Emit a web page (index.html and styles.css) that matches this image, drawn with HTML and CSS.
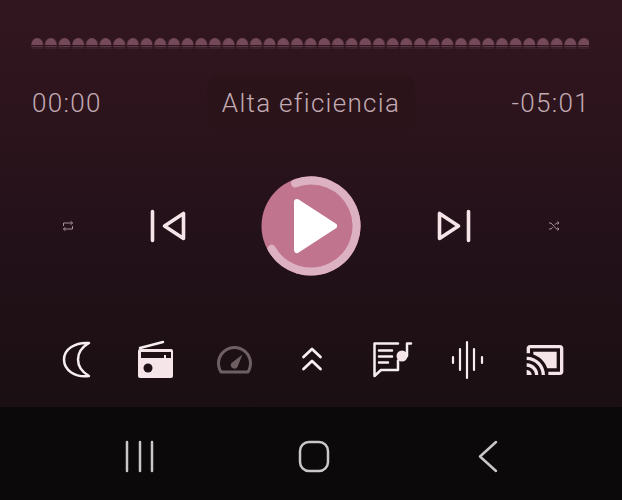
FILE: index.html
```html
<!DOCTYPE html>
<html lang="en">
<head>
    <meta charset="UTF-8">
    <meta name="viewport" content="width=device-width, initial-scale=1.0">
    <title>Player</title>
    <link rel="stylesheet" href="styles.css">
</head>
<body>
    <div class="player">
        <!-- Seek bar -->
        <svg class="seek" width="558" height="13" viewBox="0 0 558 13">
            <defs>
                <pattern id="bump" width="13.67" height="13" patternUnits="userSpaceOnUse">
                    <path d="M0.300 8V7.500A5.900 6.500 0 0 1 12.100 7.500V8Z" fill="#744a5a"/>
                    <rect x="0.300" y="9" width="11.800" height="1.200" fill="#5a3845"/>
                    <rect x="0.300" y="10.800" width="11.800" height="1" fill="#3f2530"/>
                </pattern>
            </defs>
            <rect width="558" height="13" fill="url(#bump)"/>
        </svg>

        <!-- Times -->
        <div class="times">
            <span class="time">00:00</span>
            <span class="quality">Alta eficiencia</span>
            <span class="time time-end">-05:01</span>
        </div>

        <!-- Transport -->
        <div class="transport">
            <svg class="small-icon" width="12" height="12" viewBox="0 0 12 12">
                <path d="M1.500 6V3H10.500M8.800 1.200 10.500 3 8.800 4.800M10.500 6V9H1.500M3.200 7.200 1.500 9 3.200 10.800"/>
            </svg>
            <svg class="skip-icon" width="40" height="36" viewBox="0 0 40 36">
                <path d="M5.500 3.500V32.500M36.500 5.500V30.500L17.500 18Z"/>
            </svg>
            <svg class="play-btn" width="100" height="100" viewBox="0 0 100 100">
                <circle cx="50" cy="50" r="49.500" fill="#c0748e"/>
                <path class="play-ring" d="M34 7.400A45.500 45.500 0 1 1 10.500 72.600"/>
                <path class="play-arrow" d="M36 26 73 50 36 74Z"/>
            </svg>
            <svg class="skip-icon" width="40" height="36" viewBox="0 0 40 36">
                <path d="M34.500 3.500V32.500M5.500 5.500V30.500L24.500 18Z"/>
            </svg>
            <svg class="small-icon" width="12" height="12" viewBox="0 0 12 12">
                <path d="M1 3H3L8.500 9H11M1 9H3L4.600 7.200M6.800 4.800 8.500 3H11M9.500 1.500 11 3 9.500 4.500M9.500 7.500 11 9 9.500 10.500"/>
            </svg>
        </div>

        <!-- Option icons -->
        <div class="options">
            <svg class="opt-icon" width="40" height="40" viewBox="0 0 40 40">
                <path d="M32 3C18 2 7 9 7 19.500S18 38 32 36C25 32 21 26 21 19.500S25 7 32 3Z"/>
            </svg>
            <svg class="opt-icon" width="40" height="40" viewBox="0 0 40 40">
                <path d="M5 8 28 2"/>
                <rect class="opt-fill" x="3" y="9" width="35" height="29" rx="2"/>
                <rect class="opt-hole" x="6" y="12" width="30" height="6"/>
                <rect class="opt-fill" x="29" y="15" width="2" height="3"/>
                <circle class="opt-hole" cx="13" cy="28" r="4.500"/>
            </svg>
            <svg class="opt-icon dim" width="40" height="40" viewBox="0 0 40 40">
                <path d="M8 32A16 16 0 1 1 35 32Z"/>
                <path class="dim-fill" d="M29.500 14.500 24.500 27A3.500 3.500 0 0 1 18.500 23Z"/>
            </svg>
            <svg class="opt-icon chevrons" width="40" height="40" viewBox="0 0 40 40">
                <path d="M12.500 17 21 9 29.500 17M12.500 29 21 21 29.500 29"/>
            </svg>
            <svg class="opt-icon" width="40" height="40" viewBox="0 0 40 40">
                <path d="M29 3.500H5.500V36L12 30H29V20.500M10 10.500H23M10 16.500H23M10 22.500H19"/>
                <circle class="opt-fill" cx="33" cy="16" r="5.500"/>
                <path d="M38 16V3.500H42"/>
            </svg>
            <svg class="opt-icon thin" width="40" height="40" viewBox="0 0 40 40">
                <path d="M6 17V23M13 9V30M20 2V38M27 9V30M35 17V23"/>
            </svg>
            <svg class="opt-cast" width="40" height="40" viewBox="0 0 24 24">
                <path d="M1 18v3h3c0-1.660-1.340-3-3-3zm0-4v2c2.760 0 5 2.240 5 5h2c0-3.870-3.130-7-7-7zm18-7H5v1.630c3.960 1.280 7.090 4.410 8.370 8.370H19V7zM1 10v2c4.970 0 9 4.030 9 9h2c0-6.080-4.930-11-11-11zm20-7H3c-1.100 0-2 .9-2 2v3h2V5h18v14h-7v2h7c1.100 0 2-.9 2-2V5c0-1.100-.9-2-2-2z"/>
            </svg>
        </div>
    </div>

    <!-- Navigation bar -->
    <div class="navbar">
        <svg class="nav-icon" width="32" height="34" viewBox="0 0 32 34">
            <path d="M3 2V31M16 2V31M28 2V31"/>
        </svg>
        <svg class="nav-icon" width="32" height="34" viewBox="0 0 32 34">
            <rect x="2" y="2" width="28" height="29" rx="9"/>
        </svg>
        <svg class="nav-icon" width="32" height="34" viewBox="0 0 32 34">
            <path d="M24 2 8 16.500 24 31"/>
        </svg>
    </div>
</body>
</html>
```

FILE: styles.css
```css
* {
    margin: 0;
    padding: 0;
    box-sizing: border-box;
}

body {
    width: 622px;
    height: 500px;
    overflow: hidden;
    background: #0b090a;
    font-family: Roboto, sans-serif;
}

svg {
    display: block;
    overflow: visible;
}

.player {
    height: 407px;
    padding-top: 37px;
    background: linear-gradient(180deg, #32161f 0%, #2c141c 30%, #24111a 55%, #1a0f12 100%);
}

/* Seek bar */
.seek {
    margin-left: 31px;
}

/* Times */
.times {
    display: grid;
    grid-template-columns: 1fr auto 1fr;
    align-items: center;
    height: 54px;
    margin-top: 26px;
    padding: 0 32px;
    font-size: 26px;
    font-weight: 300;
    letter-spacing: 1.300px;
    color: #c2aab2;
}

.time-end {
    justify-self: end;
}

.quality {
    padding: 12px 15px;
    background: #2a1319;
    border-radius: 10px;
}

/* Transport */
.transport {
    display: grid;
    grid-template-columns: 100px 98px 190px 96px 104px;
    align-items: center;
    justify-items: center;
    height: 100px;
    margin-top: 46px;
    padding-left: 18px;
}

.small-icon path {
    fill: none;
    stroke: #a8929a;
    stroke-width: 1;
}

.skip-icon path {
    fill: none;
    stroke: #f5e5e9;
    stroke-width: 3.600;
    stroke-linecap: round;
    stroke-linejoin: round;
}

.play-ring {
    fill: none;
    stroke: #dcb1c2;
    stroke-width: 8;
    stroke-linecap: round;
}

.play-arrow {
    fill: #fff;
    stroke: #fff;
    stroke-width: 6;
    stroke-linejoin: round;
}

/* Option icons */
.options {
    display: grid;
    grid-template-columns: repeat(7, 78px);
    justify-items: center;
    margin-top: 64px;
    padding-left: 38px;
}

.opt-icon path {
    fill: none;
    stroke: #f7eef0;
    stroke-width: 2.500;
    stroke-linecap: round;
    stroke-linejoin: round;
}

.opt-icon .opt-fill {
    fill: #f5e5e9;
    stroke: none;
}

.opt-icon .opt-hole {
    fill: #1e1015;
    stroke: none;
}

.opt-icon.chevrons path {
    stroke-width: 2.800;
}

.opt-icon.thin path {
    stroke-width: 2.200;
}

.opt-icon.dim path {
    stroke: #6d5f62;
    stroke-width: 3;
}

.opt-icon.dim .dim-fill {
    fill: #6d5f62;
    stroke: none;
}

.opt-cast path {
    fill: #f5e5e9;
}

/* Navigation bar */
.navbar {
    display: grid;
    grid-template-columns: repeat(3, 174px);
    justify-items: center;
    height: 93px;
    padding: 33px 0 0 53px;
}

.nav-icon path,
.nav-icon rect {
    fill: none;
    stroke: #c9c7c8;
    stroke-width: 2.500;
    stroke-linecap: round;
    stroke-linejoin: round;
}
```
